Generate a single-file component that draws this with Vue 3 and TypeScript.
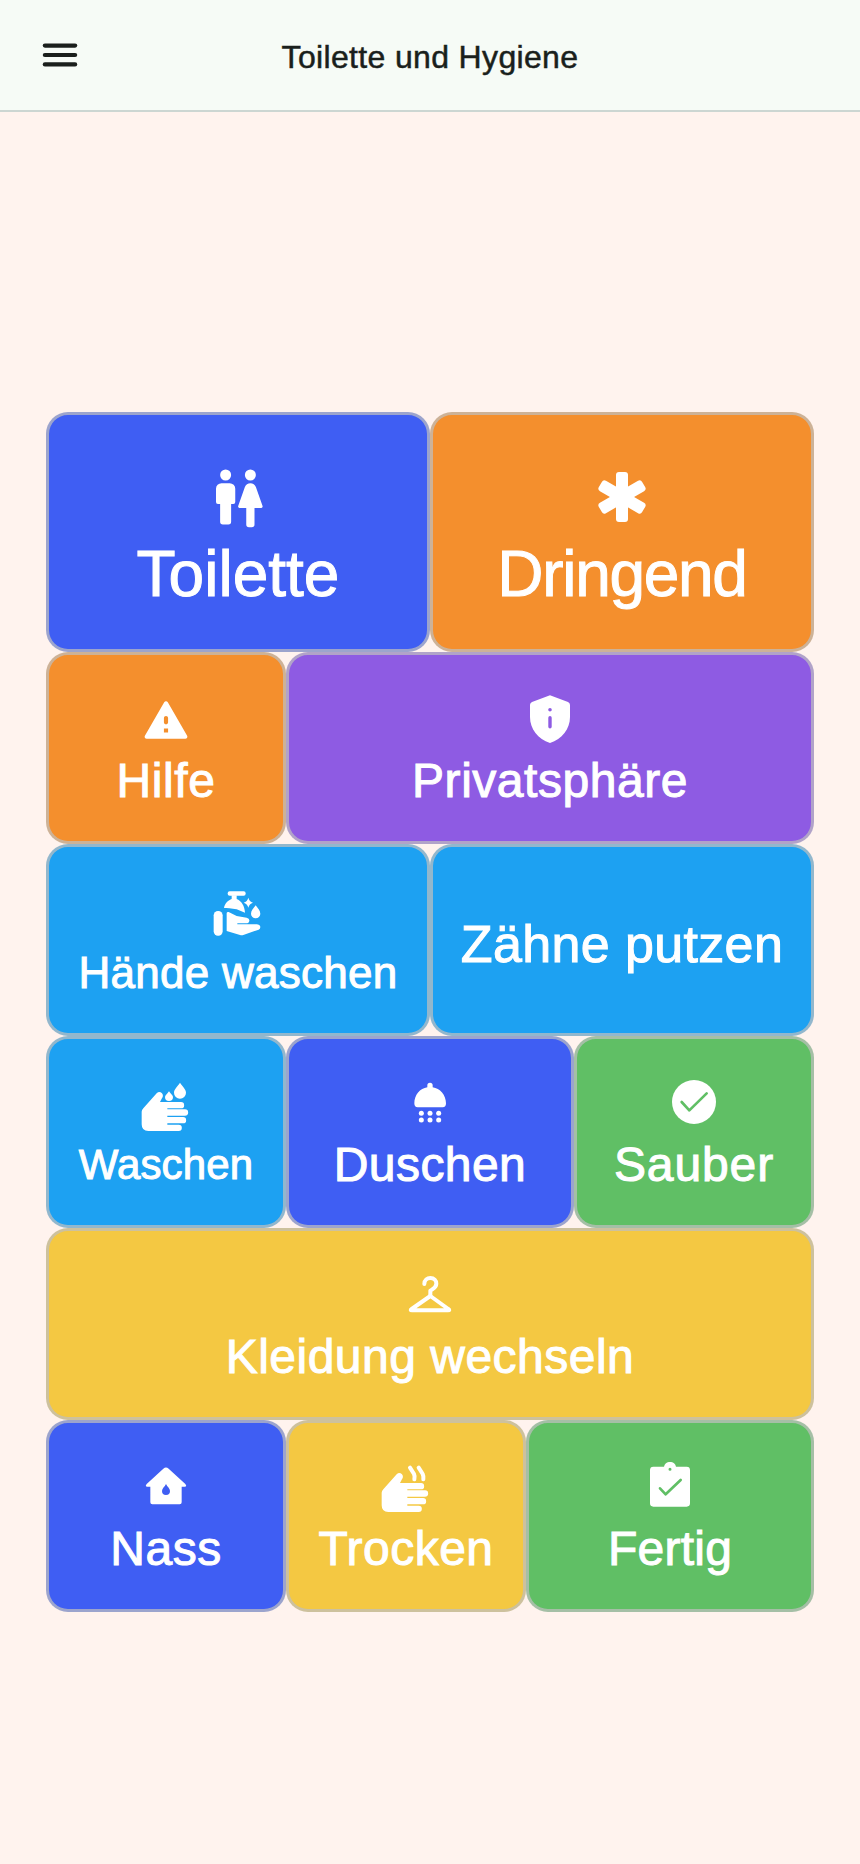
<script setup lang="ts">
const handPath =
  'M95 125 Q95 120 100 115 L140 70 Q148 62 156 70 Q162 78 155 86 L150 96 L213 96 A9.5 9.5 0 0 1 213 115 L172 115 L172 118 L225 118 A9.5 9.5 0 0 1 225 137 L172 137 L172 141 L219 141 A9.5 9.5 0 0 1 219 160 L172 160 L172 164 L206 164 A9.5 9.5 0 0 1 206 183 L115 183 Q95 183 95 163 Z'

type Tile = { label: string; span: number; tone: string; icon?: string; size: string; track: number }

const tiles: Tile[] = [
  { label: 'Toilette', span: 8, tone: 'blue', icon: 'wc', size: 'xl', track: 0 },
  { label: 'Dringend', span: 8, tone: 'orange', icon: 'asterisk', size: 'xl', track: -1.3 },
  { label: 'Hilfe', span: 5, tone: 'orange', icon: 'warning', size: 'l', track: 0.55 },
  { label: 'Privatsphäre', span: 11, tone: 'purple', icon: 'shield', size: 'l', track: 0.53 },
  { label: 'Hände waschen', span: 8, tone: 'sky', icon: 'soap', size: 'm', track: 0.27 },
  { label: 'Zähne putzen', span: 8, tone: 'sky', size: 'lg', track: 0.36 },
  { label: 'Waschen', span: 5, tone: 'sky', icon: 'wash', size: 's', track: 0.17 },
  { label: 'Duschen', span: 6, tone: 'blue', icon: 'shower', size: 'l', track: 0.44 },
  { label: 'Sauber', span: 5, tone: 'green', icon: 'check', size: 'l', track: 0.87 },
  { label: 'Kleidung wechseln', span: 16, tone: 'yellow', icon: 'hanger', size: 'l', track: 0.49 },
  { label: 'Nass', span: 5, tone: 'blue', icon: 'home', size: 'l', track: 0.5 },
  { label: 'Trocken', span: 5, tone: 'yellow', icon: 'dry', size: 'l', track: 0.5 },
  { label: 'Fertig', span: 6, tone: 'green', icon: 'clipboard', size: 'l', track: 0.25 },
]
</script>

<template>
  <div class="page">
    <header class="bar">
      <svg class="menu" viewBox="0 0 24 24" fill="currentColor" aria-hidden="true">
        <rect x="3" y="6" width="18" height="2.2" rx="1.1" />
        <rect x="3" y="10.9" width="18" height="2.2" rx="1.1" />
        <rect x="3" y="15.8" width="18" height="2.2" rx="1.1" />
      </svg>
      <h1 class="title">Toilette und Hygiene</h1>
      <span class="spacer"></span>
    </header>
    <main class="board">
      <button
        v-for="t in tiles"
        :key="t.label"
        class="tile"
        :class="[t.tone, t.size]"
        :style="{ gridColumn: `span ${t.span}` }"
      >
        <svg v-if="t.icon === 'wc'" class="icon big" viewBox="0 0 24 24" fill="currentColor">
          <path d="M7.5 6a2 2 0 1 0 0-4 2 2 0 0 0 0 4zm9 0a2 2 0 1 0 0-4 2 2 0 0 0 0 4zM6 7h3a2 2 0 0 1 2 2v4.800a.7.7 0 0 1-.7.7H9.500v6.500a1 1 0 0 1-1 1h-2a1 1 0 0 1-1-1v-6.500H4.700a.7.7 0 0 1-.7-.7V9a2 2 0 0 1 2-2zM16.500 7c.9 0 1.700.6 2 1.400l2.400 6.800c.2.500-.2.800-.6.800H18v6a1 1 0 0 1-1 1h-1a1 1 0 0 1-1-1v-6h-2.300c-.5 0-.8-.4-.6-.8l2.400-6.800c.3-.8 1.100-1.400 2-1.400z" />
        </svg>
        <svg v-else-if="t.icon === 'asterisk'" class="icon big" viewBox="0 0 66 66" fill="currentColor">
          <rect x="27" y="8" width="12" height="50" rx="3" />
          <rect x="27" y="8" width="12" height="50" rx="3" transform="rotate(60 33 33)" />
          <rect x="27" y="8" width="12" height="50" rx="3" transform="rotate(-60 33 33)" />
        </svg>
        <svg v-else-if="t.icon === 'warning'" class="icon" viewBox="0 -0.5 24 24" fill="currentColor">
          <path fill-rule="evenodd" d="M2.730 21h18.540c.77 0 1.250-.83.87-1.500l-9.270-16c-.39-.67-1.350-.67-1.730 0l-9.270 16c-.39.67.09 1.500.86 1.500zM13 18h-2v-2h2v2zm-1-4c-.55 0-1-.45-1-1v-2c0-.55.45-1 1-1s1 .45 1 1v2c0 .55-.45 1-1 1z" />
        </svg>
        <svg v-else-if="t.icon === 'shield'" class="icon" viewBox="0 -1 50 50" fill="currentColor">
          <path fill-rule="evenodd" d="M25 .3 43 7q2 .8 2 3v12c0 12-8 22-20 26C13 44 5 34 5 22V10q0-2.200 2-3zm0 12.700a1.800 1.800 0 1 0 0 3.600 1.800 1.800 0 0 0 0-3.600zm0 8a1.700 1.700 0 0 0-1.700 1.700v9a1.700 1.700 0 0 0 3.400 0v-9A1.700 1.700 0 0 0 25 21z" />
        </svg>
        <svg v-else-if="t.icon === 'soap'" class="icon" viewBox="99 24 150 150" fill="currentColor">
          <rect x="101" y="93" width="27" height="74" rx="13" />
          <path d="M140 100Q140 95 146 96L170 108L200 113Q209 115 208 122Q207 130 198 130L172 130L172 133L226 133Q236 131 240 137Q243 145 236 149L190 165Q185 167 180 165L140 153Z" />
          <path d="M132 84C134 70 146 60 155 57L155 46L170 46L170 57C184 62 194 78 195 98L170 88C155 85 140 84 132 84Z" />
          <rect x="143" y="34" width="54" height="13" rx="6" />
          <path d="M205 53Q208 65 219 68Q208 71 205 83Q202 71 191 68Q202 65 205 53Z" />
          <path d="M227 76C234 86 241 92 241 101A14 14 0 0 1 213 101C213 92 220 86 227 76Z" />
        </svg>
        <svg v-else-if="t.icon === 'wash'" class="icon" viewBox="93 36 150 150" fill="currentColor">
          <path :d="handPath" />
          <path d="M177 64C182 72 189 76 189 81A12 12 0 0 1 165 81C165 76 172 72 177 64Z" />
          <path d="M210 38C218 50 228 58 228 68A18 18 0 0 1 192 68C192 58 202 50 210 38Z" />
        </svg>
        <svg v-else-if="t.icon === 'shower'" class="icon" viewBox="105 24 150 150" fill="currentColor">
          <path d="M133 100C133 75 150 55 172 52L172 46A8 8 0 0 1 188 46L188 52C210 55 228 75 228 100Q228 112 218 112L143 112Q133 112 133 100Z" />
          <circle cx="154" cy="130" r="7.500" /><circle cx="180" cy="130" r="7.500" /><circle cx="206" cy="130" r="7.500" />
          <circle cx="154" cy="150" r="7.500" /><circle cx="180" cy="150" r="7.500" /><circle cx="206" cy="150" r="7.500" />
        </svg>
        <svg v-else-if="t.icon === 'check'" class="icon" viewBox="87 25 150 150" fill="currentColor">
          <circle cx="162" cy="97" r="66" />
          <path d="M125 97L148 122L200 71" class="cut" />
        </svg>
        <svg v-else-if="t.icon === 'hanger'" class="icon" viewBox="105 30 150 150" fill="none" stroke="currentColor" stroke-width="12" stroke-linejoin="round" stroke-linecap="round">
          <path d="M163 72C163 60 172 54 181 54C192 54 199 62 199 71C199 82 191 85 181 92L181 108" />
          <path d="M181 108L235 147Q241 151 234 151L126 151Q119 151 125 147Z" />
        </svg>
        <svg v-else-if="t.icon === 'home'" class="icon" viewBox="93 36 150 150" fill="currentColor">
          <path fill-rule="evenodd" d="M160 56Q168 49 176 56L226 102Q232 110 224 110L215 110L215 157Q215 163 209 163L127 163Q121 163 121 157L121 110L112 110Q104 110 110 102ZM168 102C164 110 156 116 156 123A12 12 0 0 0 180 123C180 116 172 110 168 102Z" />
        </svg>
        <svg v-else-if="t.icon === 'dry'" class="icon" viewBox="813 36 150 150" fill="currentColor">
          <path :d="handPath" transform="translate(720 3)" />
          <path d="M900 53L912 72Q915 78 913 88M926 53L938 72Q941 78 940 88" fill="none" stroke="currentColor" stroke-width="12" stroke-linecap="round" />
        </svg>
        <svg v-else-if="t.icon === 'clipboard'" class="icon" viewBox="75 36 150 150" fill="currentColor">
          <path fill-rule="evenodd" d="M132 50A18.500 18.500 0 0 1 168 50L200 50Q210 50 210 60L210 160Q210 170 200 170L100 170Q90 170 90 160L90 60Q90 50 100 50ZM150 53A4.500 4.500 0 1 0 150 62A4.500 4.500 0 1 0 150 53Z" />
          <path d="M120 115L137 133L182 90" class="cut" />
        </svg>
        <span class="label" :style="{ letterSpacing: `${t.track}px` }">{{ t.label }}</span>
      </button>
    </main>
  </div>
</template>

<style>
html,
body {
  margin: 0;
  background: #fff3ee;
}
</style>

<style scoped>
.page {
  min-height: 1864px;
  background: #fff3ee;
  font-family: "Liberation Sans", Arial, sans-serif;
}
.bar {
  height: 110px;
  display: flex;
  align-items: center;
  padding: 0 37px;
  background: #f6fbf6;
  border-bottom: 2px solid #ccd6d2;
  color: #1a1f1c;
}
.menu,
.spacer {
  width: 46px;
  height: 46px;
  flex: none;
}
.title {
  flex: 1;
  margin: 0;
  padding-top: 4px;
  text-align: center;
  font-size: 32px;
  font-weight: 400;
  letter-spacing: 0.34px;
  -webkit-text-stroke: 0.5px currentColor;
}
.board {
  display: grid;
  grid-template-columns: repeat(16, 48px);
  grid-template-rows: 240px repeat(5, 192px);
  padding: 300px 46px 0;
}
.tile {
  display: flex;
  flex-direction: column;
  align-items: center;
  justify-content: center;
  box-sizing: border-box;
  min-width: 0;
  padding: 0;
  border: 3px solid rgba(190, 190, 190, 0.73);
  border-radius: 22px;
  color: #fff;
  font-family: inherit;
}
.blue { background: #3f5ef3; }
.orange { background: #f48f2d; }
.purple { background: #8e5be3; }
.sky { background: #1da1f2; }
.green { background: #60bf65; }
.yellow { background: #f4c842; }
.icon {
  width: 50px;
  height: 50px;
  flex: none;
}
.icon.big {
  width: 66px;
  height: 66px;
}
.cut {
  fill: none;
  stroke: #60bf65;
  stroke-width: 8;
  stroke-linecap: round;
  stroke-linejoin: round;
}
.label {
  white-space: nowrap;
  line-height: 1;
  margin: 4px 0 -4px;
  -webkit-text-stroke: 1px currentColor;
}
.l .icon + .label,
.m .icon + .label { margin: 13px 0 -3px; }
.xl .icon + .label { margin: 12px 0 -6px; }
.s .icon + .label { margin: 12px 0 -4px; }
.xl .label { font-size: 64px; }
.lg .label { font-size: 52px; }
.l .label { font-size: 48px; }
.m .label { font-size: 44px; }
.s .label { font-size: 42px; }
</style>
